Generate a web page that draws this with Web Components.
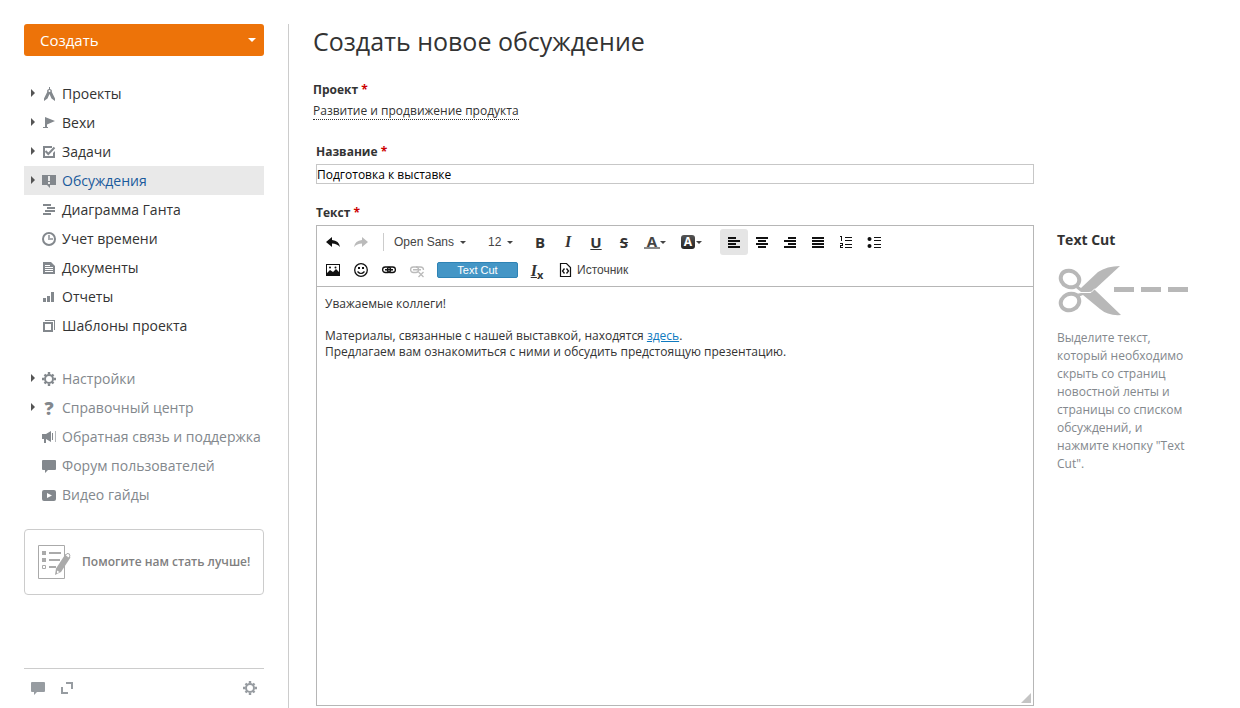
<!DOCTYPE html>
<html lang="ru">
<head>
<meta charset="utf-8">
<title>Создать новое обсуждение</title>
<style>
  body {
    margin: 0;
    background: #fff;
    color: #333;
    font-family: "Open Sans", "Liberation Sans", sans-serif;
    font-size: 12px;
    line-height: 16px;
  }
</style>
</head>
<body>
<app-page></app-page>

<script>
/**
 * Icon set. Every entry is [width, height, markup].
 */
const ICONS = {
  compass: [16, 16, `<path fill-rule="evenodd" d="M8 2h1v2a2.500 2.500 0 0 1 1.800 3L14 13.500V16l-3.500-2.500L8.500 9l-2 4.500L3 16v-2.500L6.200 7A2.500 2.500 0 0 1 8 4zM8.500 5a1 1 0 1 0 0 2 1 1 0 0 0 0-2z"/>`],
  flag: [16, 16, `<path d="M4 3l10 4-8 3.500V13h1v1H2v-1h2z"/>`],
  task: [16, 16, `<path d="M11 3v2H4v8h8v-3l2-2v7H2V3z"/><path d="M4.500 8l2.800 3L13.500 4.500" fill="none" stroke="currentColor" stroke-width="2"/>`],
  discuss: [16, 16, `<path fill-rule="evenodd" d="M1 3h14v10H9v3l-3-3H1zM7 4v5h2V4zM7 10v2h2v-2z"/>`],
  gantt: [16, 16, `<path d="M2 3h8v2H2zM6 6h8v2H6zM4 9h10v2H4zM2 12h8v2H2z"/>`],
  clock: [16, 16, `<circle cx="8" cy="9" r="6" fill="none" stroke="currentColor" stroke-width="2"/><path d="M7 5h2v3h3v2H7z" opacity=".7"/>`],
  doc: [16, 16, `<path fill-rule="evenodd" d="M2 3h8l4 4v8H2zM4 6v1h5V6zM4 8v1h8V8zM4 10v1h8v-1zM4 12v1h8v-1z"/>`],
  bars: [16, 16, `<path d="M2 10h3v4H2zM6 8h3v6H6zM10 4h3v10h-3z"/>`],
  copies: [16, 16, `<path fill-rule="evenodd" d="M2 5h10v10H2zM4 7v6h6V7z"/><path d="M4 3h10v10h-1V4H4z"/>`],
  gear: [16, 16, `<circle cx="8" cy="9" r="4" fill="none" stroke="currentColor" stroke-width="2"/><g stroke="currentColor" stroke-width="2.400"><path d="M8 2v2M8 14v2M1 9h2M13 9h2M3.500 4.500L5 6M11 12l1.500 1.500M12.500 4.500L11 6M5 12l-1.500 1.500"/></g>`],
  horn: [16, 16, `<path d="M1 6h4l5-3v11l-5-3v4H3v-4H1zM11 5h1v7h-1z"/><path d="M14 3h1v11h-1z" opacity=".6"/>`],
  bubble: [16, 16, `<path d="M2 3h12q1 0 1 1v8q0 1-1 1H7l-3 3v-3H2q-1 0-1-1V4q0-1 1-1z"/>`],
  video: [16, 16, `<path fill-rule="evenodd" d="M3 4h10q2 0 2 2v7q0 2-2 2H3q-2 0-2-2V6q0-2 2-2zM6 7v5l5-2.500z"/>`],
  arrow: [6, 8, `<path d="M1 0l4 4-4 4z"/>`],
  caret: [6, 3, `<path d="M0 0h6L3 3z"/>`],
  bigcaret: [8, 4, `<path d="M0 0h8L4 4z"/>`],
  survey: [34, 36, `<path d="M1.500 1.500h26v33h-26z" fill="none" stroke="currentColor"/><path d="M5 7h4v4H5zM12 8h12v2H12zM5 14h4v4H5zM12 15h11v2H12zM12 22h7v2h-7z"/><path d="M5.500 21.500h3v3h-3z" fill="none" stroke="currentColor"/><path d="M18 31l1-6.500L28.500 10l5 3.500L24 28z"/><path d="M20 26.500l2.500 1.500-2.500 1.500z" fill="#fff"/><path d="M28.500 11.500l1.500-2q3-.5 3 2.500l-1.500 2z" fill="#fff" stroke="currentColor"/>`],
  expand: [16, 16, `<path d="M7 3h7v7h-2V5H7zM2 8h2v5h5v2H2z"/>`],
  scissors: [132, 52, `<g transform="translate(1)"><g fill="none" stroke="currentColor" stroke-width="4"><ellipse cx="12" cy="14" rx="9.500" ry="8" transform="rotate(25 12 14)"/><ellipse cx="12" cy="37" rx="9.500" ry="8" transform="rotate(-25 12 37)"/></g><path d="M19 20l4 3 17-16Q49 1 62 1L36 25q-2 2-5 2h-8l-5-4zM18 29l5-1h9l3-3h2L63 50Q50 51 42 44L25 30l-5 2z"/><path d="M20 27.500h13l4-4" fill="none" stroke="#fff"/><path d="M56 22h20v5H56zM83 22h20v5H83zM110 22h20v5h-20z"/></g>`],
  undo: [16, 16, `<path d="M7 3v3q7 .5 8 7-3-3.500-8-3.500V13L1 8z"/>`],
  redo: [16, 16, `<path d="M9 3v3q-7 .5-8 7 3-3.500 8-3.500V13l6-5z"/>`],
  left: [16, 16, `<path d="M2 3h8v2H2zM2 6h12v2H2zM2 9h8v2H2zM2 12h12v2H2z"/>`],
  center: [16, 16, `<path d="M2 3h12v2H2zM4 6h8v2H4zM2 9h12v2H2zM4 12h8v2H4z"/>`],
  right: [16, 16, `<path d="M6 3h8v2H6zM2 6h12v2H2zM6 9h8v2H6zM2 12h12v2H2z"/>`],
  justify: [16, 16, `<path d="M2 3h12v2H2zM2 6h12v2H2zM2 9h12v2H2zM2 12h12v2H2z"/>`],
  numbered: [16, 16, `<path d="M2 2h2v5H3V3H2zM2 9h3v3H3v1h2v1H2v-3h2v-1H2zM7 3h7v1H7zM7 6h7v1H7zM7 10h7v1H7zM7 13h7v1H7z"/>`],
  bulleted: [16, 16, `<circle cx="3.500" cy="5" r="2"/><circle cx="3.500" cy="12" r="2"/><path d="M8 3h7v1H8zM8 6h7v1H8zM8 10h7v1H8zM8 13h7v1H8z"/>`],
  image: [16, 16, `<path fill-rule="evenodd" d="M1 2h14v12H1zM2 3v8l3-3 3 2 3-3 3 3V3z"/><circle cx="5" cy="5.500" r="1"/><circle cx="10.500" cy="5.500" r="1"/>`],
  smile: [16, 16, `<circle cx="8" cy="8" r="6.300" fill="none" stroke="currentColor" stroke-width="1.300"/><path d="M5 5h2v2H5zM9 5h2v2H9z"/><path d="M4.500 9.500q3.500 4 7 0" fill="none" stroke="currentColor" stroke-width="1.200"/>`],
  link: [16, 16, `<g fill="none" stroke="currentColor" stroke-width="1.300"><rect x="1.600" y="5" width="8" height="5.500" rx="2.700"/><rect x="6.400" y="5" width="8" height="5.500" rx="2.700"/></g><path d="M4 7h8v1.500H4z"/>`],
  unlink: [16, 16, `<g fill="none" stroke="currentColor" stroke-width="1.300"><rect x="1.600" y="5" width="8" height="5.500" rx="2.700"/><path d="M7 5h4.500q3 0 3 3M9.500 10l5 5M14.500 10l-5 5"/></g><path d="M4 7h8v1.500H4z"/>`],
  source: [13, 16, `<path d="M1.500 1.500h6l4 4v9h-10z" fill="none" stroke="currentColor" stroke-width="1.200"/><path d="M5.500 6.500L3.500 9l2 2.500M7.500 6.500l2 2.500-2 2.500" fill="none" stroke="currentColor" stroke-width="1.300"/>`],
  grip: [10, 10, `<path d="M10 0v10H0z"/>`]
};

class UiIcon extends HTMLElement {
  connectedCallback() {
    const [w, h, body] = ICONS[this.getAttribute('name')];
    this.attachShadow({ mode: 'open' }).innerHTML = `
      <style>
        :host { display: block; flex-shrink: 0; width: ${w}px; height: ${h}px; }
        svg { display: block; fill: currentColor; }
      </style>
      <svg width="${w}" height="${h}" viewBox="0 0 ${w} ${h}" aria-hidden="true">${body}</svg>
    `;
  }
}

/**
 * <nav-item icon="..." expandable active muted> one row of the side menu.
 */
class NavItem extends HTMLElement {
  connectedCallback() {
    const icon = this.getAttribute('icon');
    const glyph = icon === 'help' ? '<b aria-hidden="true">?</b>' : `<ui-icon name="${icon}"></ui-icon>`;
    this.attachShadow({ mode: 'open' }).innerHTML = `
      <style>
        :host { display: block; }
        a {
          display: flex;
          height: 16px;
          padding: 6px 0 7px 6px;
          color: #333;
          font-size: 14px;
          white-space: nowrap;
          text-decoration: none;
        }
        :host([muted]) a { color: #83888d; }
        :host([active]) a { background: #e9e9e9; color: #1a5a9c; }
        .arrow { width: 11px; padding-top: 4px; box-sizing: border-box; color: #555; }
        .icon { width: 16px; margin-right: 5px; color: #83888d; }
        .icon b { display: block; font-size: 18px; font-weight: 800; line-height: 18px; text-align: center; }
        .text { line-height: 18px; }
      </style>
      <a href="#">
        <span class="arrow">${this.hasAttribute('expandable') ? '<ui-icon name="arrow"></ui-icon>' : ''}</span>
        <span class="icon">${glyph}</span>
        <span class="text"><slot></slot></span>
      </a>
    `;
  }
}

class CreateButton extends HTMLElement {
  connectedCallback() {
    this.attachShadow({ mode: 'open' }).innerHTML = `
      <style>
        :host { display: block; }
        button {
          display: flex;
          align-items: center;
          justify-content: space-between;
          width: 100%;
          height: 32px;
          padding: 0 8px 0 16px;
          border: 0;
          border-radius: 3px;
          background: #ed7309;
          color: #fff;
          font: 500 15px/20px "Open Sans", sans-serif;
        }
      </style>
      <button type="button"><slot></slot><ui-icon name="bigcaret"></ui-icon></button>
    `;
  }
}

class AppSidebar extends HTMLElement {
  connectedCallback() {
    this.attachShadow({ mode: 'open' }).innerHTML = `
      <style>
        :host {
          display: flex;
          flex-direction: column;
          flex: 0 0 240px;
          padding-right: 24px;
          border-right: 1px solid #ccc;
        }
        nav { margin-top: 23px; }
        nav + nav { margin-top: 24px; }
        .promo {
          display: flex;
          align-items: center;
          gap: 11px;
          height: 64px;
          margin: 20px 0;
          padding-left: 12px;
          border: 1px solid #ccc;
          border-radius: 4px;
          font-weight: 600;
          text-decoration: none;
          white-space: nowrap;
        }
        .promo ui-icon { color: #aaa; }
        .promo span { color: #808080; }
        footer {
          display: flex;
          align-items: flex-start;
          gap: 13px;
          height: 29px;
          margin-top: auto;
          padding: 10px 6px 0;
          border-top: 1px solid #ccc;
        }
        footer button { padding: 0; border: 0; background: none; color: #979ca1; }
        footer button:last-child { margin-left: auto; }
      </style>
      <create-button>Создать</create-button>
      <nav aria-label="Модули">
        <nav-item icon="compass" expandable>Проекты</nav-item>
        <nav-item icon="flag" expandable>Вехи</nav-item>
        <nav-item icon="task" expandable>Задачи</nav-item>
        <nav-item icon="discuss" expandable active>Обсуждения</nav-item>
        <nav-item icon="gantt">Диаграмма Ганта</nav-item>
        <nav-item icon="clock">Учет времени</nav-item>
        <nav-item icon="doc">Документы</nav-item>
        <nav-item icon="bars">Отчеты</nav-item>
        <nav-item icon="copies">Шаблоны проекта</nav-item>
      </nav>
      <nav aria-label="Помощь">
        <nav-item icon="gear" expandable muted>Настройки</nav-item>
        <nav-item icon="help" expandable muted>Справочный центр</nav-item>
        <nav-item icon="horn" muted>Обратная связь и поддержка</nav-item>
        <nav-item icon="bubble" muted>Форум пользователей</nav-item>
        <nav-item icon="video" muted>Видео гайды</nav-item>
      </nav>
      <a class="promo" href="#"><ui-icon name="survey"></ui-icon><span>Помогите нам стать лучше!</span></a>
      <footer>
        <button type="button" aria-label="Чат"><ui-icon name="bubble"></ui-icon></button>
        <button type="button" aria-label="Развернуть"><ui-icon name="expand"></ui-icon></button>
        <button type="button" aria-label="Настройки"><ui-icon name="gear"></ui-icon></button>
      </footer>
    `;
  }
}

const fieldLabel = `
  .label { display: block; margin-bottom: 4px; font-weight: 700; }
  .label i { color: #c00; font-style: normal; }
`;

class ProjectField extends HTMLElement {
  connectedCallback() {
    this.attachShadow({ mode: 'open' }).innerHTML = `
      <style>
        :host { display: block; }
        ${fieldLabel}
        a { display: inline-block; border-bottom: 1px dotted #333; color: #333; line-height: 17px; text-decoration: none; }
      </style>
      <span class="label" id="label">Проект <i>*</i></span>
      <a href="#" aria-describedby="label"><slot></slot></a>
    `;
  }
}

class TextField extends HTMLElement {
  connectedCallback() {
    this.attachShadow({ mode: 'open' }).innerHTML = `
      <style>
        :host { display: block; }
        ${fieldLabel}
        input {
          display: block;
          box-sizing: border-box;
          width: 100%;
          height: 20px;
          padding: 0;
          border: 1px solid #c7c7c7;
          color: #000;
          font: 12px "Open Sans", sans-serif;
        }
      </style>
      <label class="label" for="field">${this.getAttribute('label')} <i>*</i></label>
      <input type="text" id="field" value="${this.getAttribute('value')}">
    `;
  }
}

/**
 * <tool-button icon label pressed disabled menu> square toolbar button.
 * Letters such as B or I come in through the slot.
 */
class ToolButton extends HTMLElement {
  connectedCallback() {
    const icon = this.getAttribute('icon');
    this.attachShadow({ mode: 'open' }).innerHTML = `
      <style>
        :host { display: block; color: #333; }
        :host([icon]) { color: #111; }
        :host([disabled]) { color: #bbb; }
        button {
          display: flex;
          align-items: center;
          width: 28px;
          height: 26px;
          padding: 0;
          border: 0;
          border-radius: 3px;
          background: none;
          color: inherit;
          font: 700 15px/16px "Open Sans", sans-serif;
        }
        :host([pressed]) button { background: #e5e5e5; }
        :host([menu]) button { width: 36px; }
        .face { display: flex; flex-shrink: 0; justify-content: center; width: 28px; }
        .caret { margin-left: -6px; color: #444; }
      </style>
      <button type="button" aria-label="${this.getAttribute('label')}">
        <span class="face">${icon ? `<ui-icon name="${icon}"></ui-icon>` : '<slot></slot>'}</span>
        ${this.hasAttribute('menu') ? '<ui-icon class="caret" name="caret"></ui-icon>' : ''}
      </button>
    `;
  }
}

class ToolSelect extends HTMLElement {
  connectedCallback() {
    const value = this.getAttribute('value');
    this.attachShadow({ mode: 'open' }).innerHTML = `
      <style>
        :host { display: grid; flex-shrink: 0; align-items: center; justify-items: end; }
        select, ui-icon { grid-area: 1 / 1; }
        select {
          appearance: none;
          width: 100%;
          height: 26px;
          padding: 0 6px;
          border: 0;
          background: none;
          color: #444;
          font: 12px "Liberation Sans", Arial, sans-serif;
        }
        ui-icon { margin-right: 6px; color: #444; pointer-events: none; }
      </style>
      <select aria-label="${this.getAttribute('label')}"><option>${value}</option></select>
      <ui-icon name="caret"></ui-icon>
    `;
  }
}

class EditorToolbar extends HTMLElement {
  connectedCallback() {
    this.attachShadow({ mode: 'open' }).innerHTML = `
      <style>
        :host { display: block; padding: 2px; border-bottom: 1px solid #b6b6b6; }
        .row { display: flex; align-items: center; height: 28px; }
        .sep { width: 1px; height: 18px; margin: 0 4px 0 8px; background: #ccc; }
        .font { width: 84px; }
        .size { width: 37px; margin: 0 7px 0 10px; }
        .align { margin-left: 10px; }
        .italic, .clear { font: italic 700 16px/16px "Liberation Serif", serif; }
        .under, .clear { text-decoration: underline; }
        .strike { text-decoration: line-through 1px; }
        .color { height: 12px; padding: 0 3px; border-bottom: 2px solid #888; line-height: 12px; color: #444; }
        .fill { width: 14px; border-radius: 3px; background: linear-gradient(#555, #222); color: #fff; font-size: 12px; line-height: 14px; }
        sub { font: 700 11px/8px "Open Sans", sans-serif; vertical-align: -3px; }
        .cut {
          width: 81px;
          height: 16px;
          margin: 0 5px 0 6px;
          padding: 0;
          border: 1px solid #2e83b5;
          border-radius: 2px;
          background: #4496c6;
          color: #fff;
          font: 11px/14px "Liberation Sans", Arial, sans-serif;
        }
        .source {
          display: flex;
          align-items: center;
          gap: 5px;
          height: 26px;
          padding: 0 8px;
          border: 0;
          background: none;
          color: #444;
          font: 12px "Liberation Sans", Arial, sans-serif;
        }
        .source ui-icon { color: #111; }
      </style>
      <div class="row">
        <tool-button icon="undo" label="Отменить"></tool-button>
        <tool-button icon="redo" label="Повторить" disabled></tool-button>
        <span class="sep"></span>
        <tool-select class="font" label="Шрифт" value="Open Sans"></tool-select>
        <tool-select class="size" label="Размер" value="12"></tool-select>
        <tool-button label="Полужирный">B</tool-button>
        <tool-button label="Курсив"><span class="italic">I</span></tool-button>
        <tool-button label="Подчеркнутый"><span class="under">U</span></tool-button>
        <tool-button label="Зачеркнутый"><span class="strike">S</span></tool-button>
        <tool-button label="Цвет текста" menu><span class="color">A</span></tool-button>
        <tool-button label="Цвет фона" menu><span class="fill">A</span></tool-button>
        <tool-button class="align" icon="left" label="По левому краю" pressed></tool-button>
        <tool-button icon="center" label="По центру"></tool-button>
        <tool-button icon="right" label="По правому краю"></tool-button>
        <tool-button icon="justify" label="По ширине"></tool-button>
        <tool-button icon="numbered" label="Нумерованный список"></tool-button>
        <tool-button icon="bulleted" label="Маркированный список"></tool-button>
      </div>
      <div class="row">
        <tool-button icon="image" label="Изображение"></tool-button>
        <tool-button icon="smile" label="Смайлы"></tool-button>
        <tool-button icon="link" label="Ссылка"></tool-button>
        <tool-button icon="unlink" label="Убрать ссылку" disabled></tool-button>
        <button class="cut" type="button">Text Cut</button>
        <tool-button label="Убрать форматирование"><span><span class="clear">I</span><sub>x</sub></span></tool-button>
        <button class="source" type="button"><ui-icon name="source"></ui-icon>Источник</button>
      </div>
    `;
  }
}

class RichEditor extends HTMLElement {
  connectedCallback() {
    this.attachShadow({ mode: 'open' }).innerHTML = `
      <style>
        :host { display: flex; flex-direction: column; }
        ${fieldLabel}
        .frame {
          position: relative;
          display: flex;
          flex: 1;
          flex-direction: column;
          border: 1px solid #b6b6b6;
        }
        .content { flex: 1; padding: 9px 8px; outline: 0; }
        .grip { position: absolute; right: 2px; bottom: 2px; color: #c4c4c4; }
      </style>
      <span class="label" id="label">Текст <i>*</i></span>
      <div class="frame">
        <editor-toolbar></editor-toolbar>
        <div class="content" role="textbox" aria-multiline="true" aria-labelledby="label" contenteditable="true" spellcheck="false"><slot></slot></div>
        <ui-icon class="grip" name="grip"></ui-icon>
      </div>
    `;
  }
}

class CutHint extends HTMLElement {
  connectedCallback() {
    this.attachShadow({ mode: 'open' }).innerHTML = `
      <style>
        :host { display: block; padding-top: 25px; color: #83888d; }
        h2 { margin: 0 0 15px; color: #333; font-size: 14px; font-weight: 700; line-height: 20px; }
        ui-icon { color: #b8b8b8; }
        p { max-width: 136px; margin: 12px 0 0; line-height: 18px; }
      </style>
      <h2>Text Cut</h2>
      <ui-icon name="scissors"></ui-icon>
      <p><slot></slot></p>
    `;
  }
}

class AppPage extends HTMLElement {
  connectedCallback() {
    this.attachShadow({ mode: 'open' }).innerHTML = `
      <style>
        :host {
          display: flex;
          box-sizing: border-box;
          min-height: 100vh;
          padding: 24px 24px 0;
        }
        main {
          display: flex;
          flex: 1;
          flex-direction: column;
          min-width: 0;
          padding: 0 0 2px 24px;
        }
        h1 { margin: 0 0 24px; font-size: 25px; font-weight: 400; line-height: 34px; }
        form {
          display: grid;
          flex: 1;
          grid-template-columns: minmax(0, 1fr) 159px;
          grid-template-rows: auto 1fr;
          gap: 21px 23px;
          margin-top: 24px;
          padding-left: 3px;
        }
        text-field { grid-area: 1 / 1; }
        rich-editor { grid-area: 2 / 1; }
        cut-hint { grid-area: 2 / 2; }
        rich-editor a { color: #0f7abf; }
      </style>
      <app-sidebar></app-sidebar>
      <main>
        <h1>Создать новое обсуждение</h1>
        <project-field>Развитие и продвижение продукта</project-field>
        <form>
          <text-field label="Название" value="Подготовка к выставке"></text-field>
          <rich-editor>
            Уважаемые коллеги!<br><br>
            Материалы, связанные с нашей выставкой, находятся <a href="#">здесь</a>.<br>
            Предлагаем вам ознакомиться с ними и обсудить предстоящую презентацию.
          </rich-editor>
          <cut-hint>Выделите текст, который необходимо скрыть со страниц новостной ленты и страницы со списком обсуждений, и нажмите кнопку "Text Cut".</cut-hint>
        </form>
      </main>
    `;
  }
}

customElements.define('ui-icon', UiIcon);
customElements.define('nav-item', NavItem);
customElements.define('create-button', CreateButton);
customElements.define('app-sidebar', AppSidebar);
customElements.define('project-field', ProjectField);
customElements.define('text-field', TextField);
customElements.define('tool-button', ToolButton);
customElements.define('tool-select', ToolSelect);
customElements.define('editor-toolbar', EditorToolbar);
customElements.define('rich-editor', RichEditor);
customElements.define('cut-hint', CutHint);
customElements.define('app-page', AppPage);
</script>
</body>
</html>
